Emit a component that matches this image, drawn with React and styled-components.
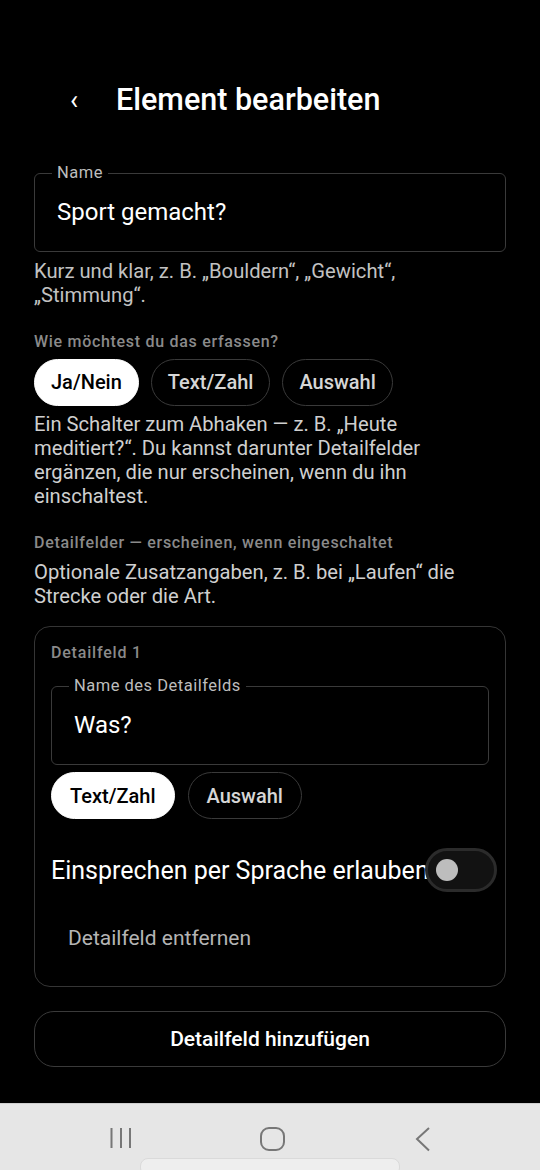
import React, { useState } from "react";
import styled, { createGlobalStyle } from "styled-components";

const GlobalStyle = createGlobalStyle`
  html, body {
    margin: 0;
    padding: 0;
    background: #000;
  }
  body {
    font-family: Roboto, "Noto Sans", "Liberation Sans", sans-serif;
    color: #fff;
  }
  * {
    box-sizing: border-box;
  }
`;

const Screen = styled.div`
  width: 540px;
  height: 1170px;
  display: flex;
  flex-direction: column;
  background: #000;
  overflow: hidden;
`;

const Content = styled.main`
  flex: 1;
  padding: 0 34px;
  display: flex;
  flex-direction: column;
`;

const Header = styled.header`
  display: flex;
  align-items: center;
  height: 40px;
  margin-top: 80px;
  margin-bottom: 44px;
`;

const BackButton = styled.button`
  background: none;
  border: none;
  color: #fff;
  font-family: inherit;
  font-size: 27px;
  line-height: 40px;
  width: 82px;
  padding: 0 0 0 36px;
  text-align: left;
`;

const Title = styled.h1`
  margin: 0;
  font-size: 30.5px;
  font-weight: 500;
  line-height: 40px;
`;

const Field = styled.fieldset`
  margin: 0;
  padding: 0 17px;
  border: 1px solid #3a3a3a;
  border-radius: 6px;
  min-width: 0;
`;

const Legend = styled.legend`
  padding: 0 5px;
  font-size: 16.5px;
  line-height: 18px;
  color: #bdbdbd;
  letter-spacing: 0.5px;
`;

const FieldValue = styled.div`
  padding: 16px 5px 25px;
  font-size: 24px;
  line-height: 28px;
  color: #fff;
`;

const Helper = styled.p`
  margin: ${({ $top }) => $top || 0}px 0 0;
  padding-right: 4px;
  font-size: 20.2px;
  line-height: 24.3px;
  color: ${({ $color }) => $color || "#c2c2c2"};
`;

const SectionLabel = styled.div`
  margin-top: ${({ $top }) => $top}px;
  font-size: 16px;
  line-height: 20px;
  color: #8a8a8a;
  letter-spacing: 0.7px;
  font-weight: 500;
`;

const ChipRow = styled.div`
  display: flex;
  gap: ${({ $gap }) => $gap || 12}px;
  margin-top: 7px;
`;

const Chip = styled.button`
  height: 47px;
  padding: 0 ${({ $pad }) => $pad || 16}px;
  border-radius: 24px;
  font-family: inherit;
  font-size: 20px;
  font-weight: 500;
  border: 1px solid ${({ $active }) => ($active ? "#fff" : "#3a3a3a")};
  background: ${({ $active }) => ($active ? "#fff" : "#000")};
  color: ${({ $active }) => ($active ? "#000" : "#d6d6d6")};
`;

const Card = styled.section`
  margin-top: 18px;
  border: 1px solid #353535;
  border-radius: 16px;
  padding: 16px 16px 26px;
  display: flex;
  flex-direction: column;
`;

const CardLabel = styled.div`
  font-size: 16px;
  line-height: 20px;
  color: #8a8a8a;
  font-weight: 500;
  letter-spacing: 0.8px;
  margin-bottom: 14px;
`;

const ToggleRow = styled.div`
  display: flex;
  align-items: center;
  margin-top: 29px;
  height: 44px;
`;

const ToggleLabel = styled.span`
  flex: 1;
  min-width: 0;
  white-space: nowrap;
  font-size: 25px;
  color: #fff;
`;

const Track = styled.button`
  position: relative;
  flex-shrink: 0;
  width: 72px;
  height: 44px;
  margin-right: -8px;
  border-radius: 22px;
  border: 3px solid #2b2b2b;
  background: #121212;
  padding: 0;
`;

const Knob = styled.span`
  position: absolute;
  top: 8px;
  left: ${({ $on }) => ($on ? "36px" : "8px")};
  width: 22px;
  height: 22px;
  border-radius: 50%;
  background: ${({ $on }) => ($on ? "#fff" : "#bdbdbd")};
`;

const TextButton = styled.button`
  align-self: flex-start;
  margin-top: 24px;
  height: 44px;
  padding: 0 17px;
  background: none;
  border: none;
  font-family: inherit;
  font-size: 21px;
  color: #b4b4b4;
`;

const OutlineButton = styled.button`
  margin-top: 24px;
  height: 56px;
  width: 100%;
  border-radius: 20px;
  border: 1px solid #3a3a3a;
  background: #000;
  color: #fff;
  font-family: inherit;
  font-size: 21px;
  font-weight: 500;
`;

const NavBar = styled.nav`
  position: relative;
  height: 67px;
  flex-shrink: 0;
  background: #e6e6e6;
  border-top: 1px solid #cfcfcf;
  display: flex;
  align-items: flex-start;
  gap: 111px;
  padding: 23px 0 0 101px;
`;

const NavIcon = styled.div`
  width: 40px;
  display: flex;
  justify-content: center;
`;

const Handle = styled.div`
  position: absolute;
  left: 140px;
  bottom: -6px;
  width: 260px;
  height: 18px;
  border-radius: 8px;
  background: #eeeeee;
  border: 1px solid #dadada;
`;

const types = ["Ja/Nein", "Text/Zahl", "Auswahl"];

const App = () => {
  const [type, setType] = useState("Ja/Nein");
  const [detailType, setDetailType] = useState("Text/Zahl");
  const [voice, setVoice] = useState(false);

  return (
    <Screen>
      <GlobalStyle />
      <Content>
        <Header>
          <BackButton>‹</BackButton>
          <Title>Element bearbeiten</Title>
        </Header>

        <Field>
          <Legend>Name</Legend>
          <FieldValue>Sport gemacht?</FieldValue>
        </Field>
        <Helper $top={7}>Kurz und klar, z. B. „Bouldern“, „Gewicht“, „Stimmung“.</Helper>

        <SectionLabel $top={24}>Wie möchtest du das erfassen?</SectionLabel>
        <ChipRow>
          {types.map(t => (
            <Chip key={t} $active={type === t} onClick={() => setType(t)}>{t}</Chip>
          ))}
        </ChipRow>
        <Helper $top={6} $color="#cfcfcf">
          Ein Schalter zum Abhaken — z. B. „Heute meditiert?“. Du kannst darunter Detailfelder ergänzen, die nur erscheinen, wenn du ihn einschaltest.
        </Helper>

        <SectionLabel $top={24}>Detailfelder — erscheinen, wenn eingeschaltet</SectionLabel>
        <Helper $top={7} $color="#cfcfcf">
          Optionale Zusatzangaben, z. B. bei „Laufen“ die Strecke oder die Art.
        </Helper>

        <Card>
          <CardLabel>Detailfeld 1</CardLabel>
          <Field>
            <Legend>Name des Detailfelds</Legend>
            <FieldValue>Was?</FieldValue>
          </Field>
          <ChipRow $gap={13}>
            {types.slice(1).map(t => (
              <Chip key={t} $pad={18} $active={detailType === t} onClick={() => setDetailType(t)}>{t}</Chip>
            ))}
          </ChipRow>
          <ToggleRow>
            <ToggleLabel>Einsprechen per Sprache erlauben</ToggleLabel>
            <Track onClick={() => setVoice(!voice)}>
              <Knob $on={voice} />
            </Track>
          </ToggleRow>
          <TextButton>Detailfeld entfernen</TextButton>
        </Card>

        <OutlineButton>Detailfeld hinzufügen</OutlineButton>
      </Content>

      <NavBar>
        <NavIcon>
          <svg width="24" height="22" viewBox="0 0 24 22">
            <g stroke="#777" strokeWidth="2">
              <line x1="2.5" y1="1" x2="2.5" y2="21" />
              <line x1="12" y1="1" x2="12" y2="21" />
              <line x1="21" y1="1" x2="21" y2="21" />
            </g>
          </svg>
        </NavIcon>
        <NavIcon>
          <svg width="25" height="24" viewBox="0 0 25 24">
            <rect x="1" y="1" width="23" height="22" rx="8" fill="none" stroke="#777" strokeWidth="2" />
          </svg>
        </NavIcon>
        <NavIcon>
          <svg width="18" height="25" viewBox="0 0 18 25">
            <polyline points="15,1 3,12 15,23.5" fill="none" stroke="#777" strokeWidth="2" />
          </svg>
        </NavIcon>
        <Handle />
      </NavBar>
    </Screen>
  );
};

export default App;
